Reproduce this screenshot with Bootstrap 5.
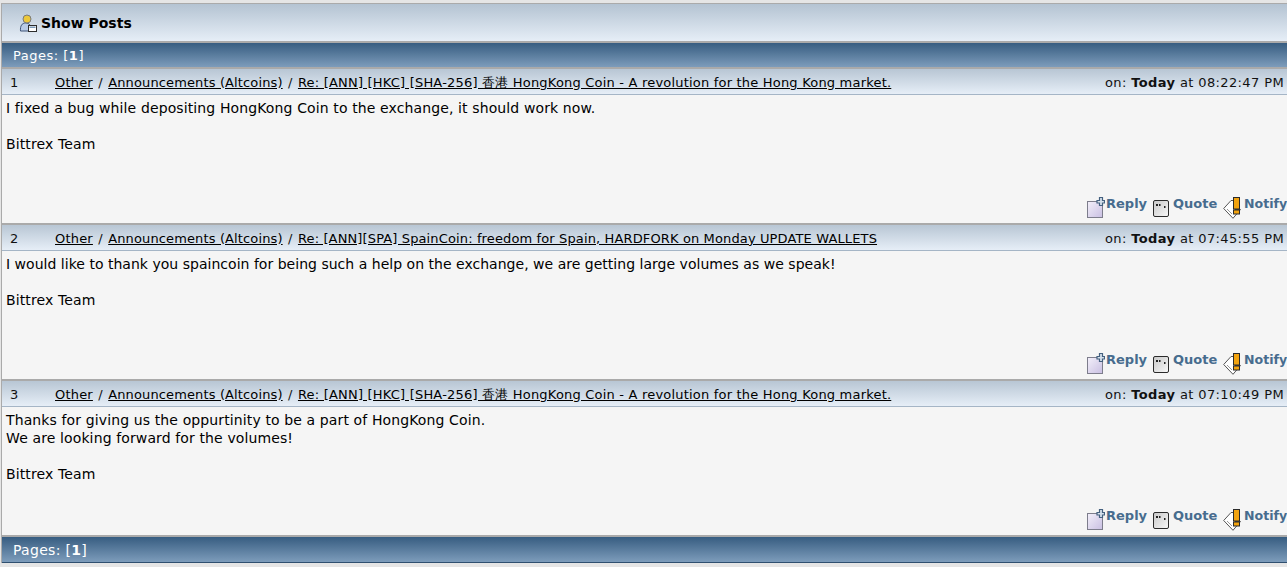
<!DOCTYPE html>
<html lang="en"><head><meta charset="utf-8"><title>Show Posts</title>
<link href="https://cdn.jsdelivr.net/npm/bootstrap@5.3.0/dist/css/bootstrap.min.css" rel="stylesheet">
<style>
html,body{height:567px;overflow:hidden}
body{background:#e5e5e5;margin:0;font-family:"DejaVu Sans","Liberation Sans",sans-serif;font-size:13px;line-height:18px;color:#000;padding-top:3px}
.wrap-all{border:1px solid #aaa;border-width:1px 0 0 1px;background:#f5f5f5;margin:0 0 0 1px;width:1286px}
.title-bar{height:39px;background:linear-gradient(#b4c3d2,#e6eef7);font-weight:700;font-size:14px;padding-left:17px;gap:4px;border-bottom:2px solid #aaa}
.pages-bar{height:26px;background:linear-gradient(#375d81,#7d9cbb);color:#fff;padding:2px 0 0 11px;border-bottom:2px solid #aaa;font-size:13px;letter-spacing:.5px}
.pages-bar.last{height:26px;padding-top:0;border-bottom:1px solid #2f4f6f;font-size:14px;letter-spacing:.3px}
.post-item{height:156px;border-bottom:2px solid #aaa}
.post-head{height:26px;background:linear-gradient(#b8c6d4,#e6eef7);border-bottom:1px solid #a5b5c6;padding:2px 3px 0 8px;color:#111;letter-spacing:.2px}
.post-num{width:45px;letter-spacing:0}
.post-when{letter-spacing:.38px}
.post-head a{color:#000;text-decoration:underline}
.crumb-sep{margin:0 1px}
.post-head a.crumb-tight{letter-spacing:.13px}
.post-text{padding:4px 0 0 4px;height:100px;font-size:14px;letter-spacing:.12px}
.text-tight{letter-spacing:.02px}
.post-acts{height:28px;align-items:flex-start;padding-left:1084px}
.act-link{color:#476c8e;font-weight:700;font-size:13px;text-decoration:none;white-space:nowrap;display:inline-flex;align-items:flex-start;line-height:16px;flex:none}
.act-reply{width:67px}
.act-reply svg{margin:2px 1px 0 0;flex:none}
.act-quote{width:70px}
.act-quote svg{margin:5px 4px 0 0;flex:none}
.act-notify{width:63px;font-size:12.600px}
.act-notify svg{margin:2px 2px 0 0;flex:none}
.act-text{padding-top:1px}
</style></head><body>
<svg width="0" height="0" class="position-absolute">
<defs>
<linearGradient id="gl" x1="0" y1="0" x2="1" y2="1"><stop offset="0" stop-color="#f3f0fa"/><stop offset="1" stop-color="#c9bfe2"/></linearGradient>
<linearGradient id="gq" x1="0" y1="0" x2="1" y2="1"><stop offset="0" stop-color="#c8c8c8"/><stop offset="1" stop-color="#f8f8f8"/></linearGradient>
<symbol id="i-reply" viewBox="0 0 19 21"><rect x="1.500" y="4.500" width="15" height="16" fill="url(#gl)" stroke="#7d7d8c"/><path d="M13.500.5h3v3h2v2.500h-2v2.500h-3V6h-2.500V3.500h2.500z" fill="#d5e0ec" stroke="#44607f" stroke-width="1.200"/></symbol>
<symbol id="i-quote" viewBox="0 0 16 17"><rect x=".5" y=".5" width="15" height="16" rx="1.500" fill="url(#gq)" stroke="#2b2b2b"/><path d="M3 4h2v2H3zM6 4h1.500v2H6zM11 6h1.500v2H11z" fill="#222"/></symbol>
<symbol id="i-notify" viewBox="0 0 19 22"><path d="M.7 11.500 8 3.500h4v9h5.500L10 21.300z" fill="#fff" stroke="#555"/><path d="M4 12 9 17" stroke="#999"/><rect x="10.500" y=".5" width="6" height="11.500" fill="#f2a30f" stroke="#2a2a2a"/><rect x="10.500" y="13" width="6" height="4" fill="#f2a30f" stroke="#2a2a2a"/></symbol>
</defs></svg>
<div class="wrap-all">
<div class="title-bar d-flex align-items-center">
<svg width="18" height="18" viewBox="0 0 18 18"><path d="M1.500 17c-.5-5 1.500-8 5-8s6 2 6 8z" fill="#b9cbe6" stroke="#3f5478"/><circle cx="8" cy="5" r="4" fill="#ecc83a" stroke="#7a7a7a"/><rect x="9.500" y="11.500" width="8" height="6" fill="#fff" stroke="#2d2d2d"/><rect x="10.500" y="12.500" width="6" height="1.500" fill="#7d9cbb"/></svg>
<span>Show Posts</span></div>
<div class="pages-bar d-flex align-items-center"><span>Pages: [<b>1</b>]</span></div>

<div class="post-item">
<div class="post-head d-flex align-items-center"><span class="post-num">1</span><span class="flex-grow-1"><a href="#">Other</a> <span class="crumb-sep">/</span> <a href="#" class="crumb-tight">Announcements (Altcoins)</a> <span class="crumb-sep">/</span> <a href="#">Re: [ANN] [HKC] [SHA-256] 香港 HongKong Coin - A revolution for the Hong Kong market.</a></span><span class="post-when">on: <b>Today</b> at 08:22:47 PM</span></div>
<div class="post-text">I fixed a bug while depositing HongKong Coin to the exchange, it should work now.<br><br>Bittrex Team</div>
<div class="post-acts d-flex">
<a class="act-link act-reply" href="#"><svg width="19" height="21"><use href="#i-reply"/></svg><span class="act-text">Reply</span></a>
<a class="act-link act-quote" href="#"><svg width="16" height="17"><use href="#i-quote"/></svg><span class="act-text">Quote</span></a>
<a class="act-link act-notify" href="#"><svg width="19" height="22"><use href="#i-notify"/></svg><span class="act-text">Notify</span></a>
</div></div>

<div class="post-item">
<div class="post-head d-flex align-items-center"><span class="post-num">2</span><span class="flex-grow-1"><a href="#">Other</a> <span class="crumb-sep">/</span> <a href="#" class="crumb-tight">Announcements (Altcoins)</a> <span class="crumb-sep">/</span> <a href="#" class="crumb-tight">Re: [ANN][SPA] SpainCoin: freedom for Spain, HARDFORK on Monday UPDATE WALLETS</a></span><span class="post-when">on: <b>Today</b> at 07:45:55 PM</span></div>
<div class="post-text"><span class="text-tight">I would like to thank you spaincoin for being such a help on the exchange, we are getting large volumes as we speak!</span><br><br>Bittrex Team</div>
<div class="post-acts d-flex">
<a class="act-link act-reply" href="#"><svg width="19" height="21"><use href="#i-reply"/></svg><span class="act-text">Reply</span></a>
<a class="act-link act-quote" href="#"><svg width="16" height="17"><use href="#i-quote"/></svg><span class="act-text">Quote</span></a>
<a class="act-link act-notify" href="#"><svg width="19" height="22"><use href="#i-notify"/></svg><span class="act-text">Notify</span></a>
</div></div>

<div class="post-item">
<div class="post-head d-flex align-items-center"><span class="post-num">3</span><span class="flex-grow-1"><a href="#">Other</a> <span class="crumb-sep">/</span> <a href="#" class="crumb-tight">Announcements (Altcoins)</a> <span class="crumb-sep">/</span> <a href="#">Re: [ANN] [HKC] [SHA-256] 香港 HongKong Coin - A revolution for the Hong Kong market.</a></span><span class="post-when">on: <b>Today</b> at 07:10:49 PM</span></div>
<div class="post-text">Thanks for giving us the oppurtinity to be a part of HongKong Coin.<br>We are looking forward for the volumes!<br><br>Bittrex Team</div>
<div class="post-acts d-flex">
<a class="act-link act-reply" href="#"><svg width="19" height="21"><use href="#i-reply"/></svg><span class="act-text">Reply</span></a>
<a class="act-link act-quote" href="#"><svg width="16" height="17"><use href="#i-quote"/></svg><span class="act-text">Quote</span></a>
<a class="act-link act-notify" href="#"><svg width="19" height="22"><use href="#i-notify"/></svg><span class="act-text">Notify</span></a>
</div></div>

<div class="pages-bar last d-flex align-items-center"><span>Pages: [<b>1</b>]</span></div>
</div>
<script src="https://cdn.jsdelivr.net/npm/bootstrap@5.3.0/dist/js/bootstrap.bundle.min.js"></script>
</body></html>
